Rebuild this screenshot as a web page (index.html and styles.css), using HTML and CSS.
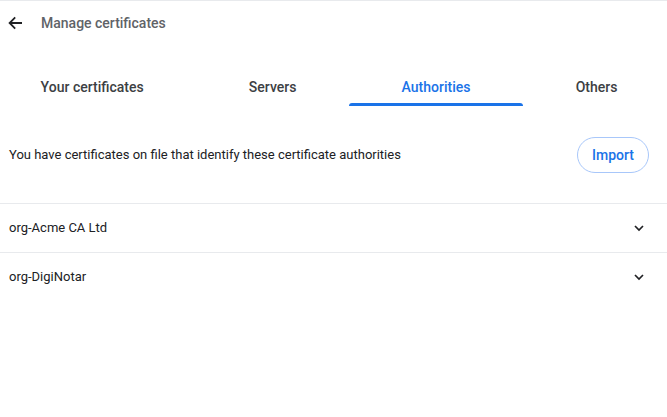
FILE: index.html
```html
<!DOCTYPE html>
<html>
<head>
<meta charset="utf-8">
<link rel="stylesheet" href="styles.css">
</head>
<body>
<div class="page">
  <header class="header">
    <button class="back" aria-label="Back">
      <svg width="16" height="16" viewBox="0 0 16 16"><path d="M15 8H2.8M8.2 2.4 2.6 8l5.6 5.6" fill="none" stroke="#202124" stroke-width="1.8"/></svg>
    </button>
    <h1 class="title">Manage certificates</h1>
  </header>
  <nav class="tabs">
    <div class="tab">Your certificates</div>
    <div class="tab">Servers</div>
    <div class="tab active">Authorities</div>
    <div class="tab">Others</div>
  </nav>
  <section class="intro">
    <p class="desc">You have certificates on file that identify these certificate authorities</p>
    <button class="import">Import</button>
  </section>
  <div class="list">
    <div class="row"><span>org-Acme CA Ltd</span>
      <svg class="chev" width="12" height="12" viewBox="0 0 12 12"><path d="M2 4l4 4 4-4" fill="none" stroke="#202124" stroke-width="1.7"/></svg></div>
    <div class="row"><span>org-DigiNotar</span>
      <svg class="chev" width="12" height="12" viewBox="0 0 12 12"><path d="M2 4l4 4 4-4" fill="none" stroke="#202124" stroke-width="1.7"/></svg></div>
  </div>
</div>
</body>
</html>
```
FILE: styles.css
```css
html, body { margin: 0; padding: 0; background: #fff; }
body { font-family: Roboto, "Noto Sans", Arial, sans-serif; color: #202124; overflow: hidden; }
.page { border-top: 1px solid #e8eaed; height: 416px; }
.header { display: flex; align-items: center; height: 43px; padding-left: 6px; }
.back { border: 0; background: none; padding: 0; width: 18px; height: 18px; display: flex; align-items: center; justify-content: center; margin-right: 17px; }
.title { margin: 0; font-size: 14px; font-weight: 500; color: #5f6368; }
.tabs { display: flex; width: 682px; margin-left: -12px; margin-top: 19px; height: 43px; }
.tab { flex: 1 1 auto; text-align: center; font-size: 14px; font-weight: 500; color: #3c4043; line-height: 20px; padding-top: 14px; box-sizing: border-box; position: relative; }
.tab.active { color: #1a73e8; }
.tab.active::after { content: ""; position: absolute; left: 0; right: 0; bottom: 0; height: 3px; background: #1a73e8; border-radius: 3px 3px 0 0; }
.intro { display: flex; align-items: center; justify-content: space-between; padding: 0 18px 0 9px; height: 97px; }
.desc { margin: 0; font-size: 13px; color: #202124; }
.import { height: 36px; width: 72px; border: 1px solid #a8c7fa; border-radius: 18px; background: #fff; color: #1a73e8; font-family: inherit; font-size: 14px; font-weight: 500; padding: 0; }
.row { display: flex; align-items: center; justify-content: space-between; height: 48px; border-top: 1px solid #e8eaed; padding: 0 22px 0 9px; font-size: 13px; }
.row span { position: relative; top: -1px; }
.chev { display: block; }
```
